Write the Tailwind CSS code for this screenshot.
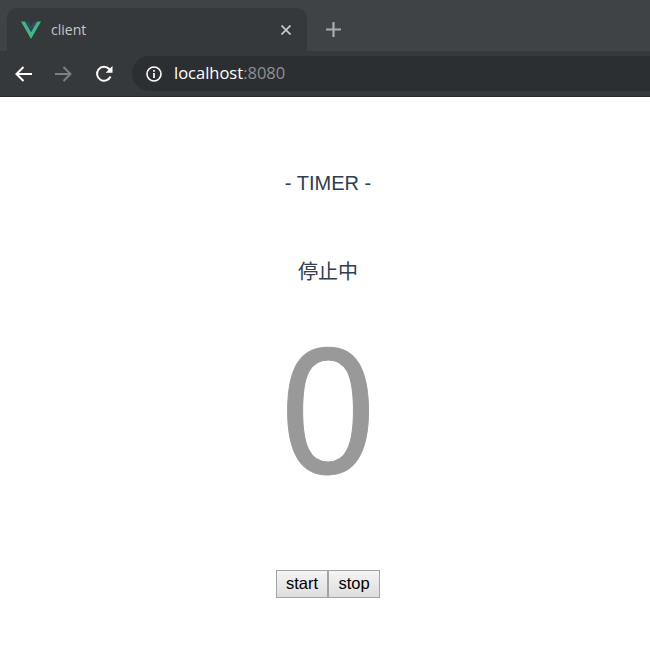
<!DOCTYPE html>
<html>
<head>
<meta charset="utf-8">
<script src="https://cdn.jsdelivr.net/npm/@tailwindcss/browser@4"></script>
</head>
<body class="w-[650px] h-[662px] overflow-hidden bg-white font-['Liberation_Sans','Noto_Sans_CJK_JP',sans-serif]">
<header class="h-[97px] bg-[#3f4346] flex flex-col border-b border-[#2a2c2e]">
  <div class="h-[51px] flex items-end pl-[7px]">
    <div class="w-[300px] h-[43px] bg-[#36393c] rounded-t-[10px] flex items-center pl-[14px] pr-[16px]">
      <svg class="w-[20px] h-[18px]" viewBox="0 0 20 18"><path d="M0 0.5H4L10 11L16 0.5H20L10 18Z" fill="#41b883"/><path d="M4 0.5H7.2L10 5.5L12.8 0.5H16L10 11Z" fill="#35495e"/></svg>
      <span class="ml-[10px] text-[14px] text-[#c4c7c5] font-['Open_Sans',sans-serif]">client</span>
      <svg class="ml-auto w-[10px] h-[10px]" viewBox="0 0 10 10"><path d="M0.5 0.5L9.5 9.5M9.5 0.5L0.5 9.5" stroke="#c8cacb" stroke-width="1.7"/></svg>
    </div>
    <svg class="ml-[19px] mb-[14px] w-[15px] h-[15px]" viewBox="0 0 15 15"><path d="M7.5 0V15M0 7.5H15" stroke="#a9abad" stroke-width="2.2"/></svg>
  </div>
  <div class="h-[45px] bg-[#36393c] flex items-center">
    <svg class="ml-[15px] w-[17px] h-[16px]" viewBox="0 0 17 16"><path d="M17 8H2M8.5 1L1.5 8L8.5 15" fill="none" stroke="#ffffff" stroke-width="2"/></svg>
    <svg class="ml-[23px] w-[17px] h-[16px]" viewBox="0 0 17 16"><path d="M0 8H15M8.5 1L15.5 8L8.5 15" fill="none" stroke="#7d7f81" stroke-width="2"/></svg>
    <svg class="ml-[23px] w-[18px] h-[18px]" viewBox="0 0 18 18"><path d="M15.5 11.5A7 7 0 1 1 14.2 4L16 6" fill="none" stroke="#ffffff" stroke-width="2"/><path d="M17.5 1V7.8H10.7Z" fill="#ffffff"/></svg>
    <div class="ml-[19px] flex-1 h-[35px] bg-[#2c2f31] rounded-l-full flex items-center pl-[14px]">
      <svg class="w-[16px] h-[16px]" viewBox="0 0 16 16"><circle cx="8" cy="8" r="7" fill="none" stroke="#ffffff" stroke-width="1.6"/><path d="M8 7V12M8 4V5.8" stroke="#ffffff" stroke-width="1.7"/></svg>
      <span class="ml-[12px] text-[16.5px] text-white font-['Open_Sans',sans-serif]">localhost<span class="text-[#8d9094]">:8080</span></span>
    </div>
  </div>
</header>
<main class="w-[656px] flex flex-col items-center text-center text-[#2c3e50]">
  <h1 class="mt-[74px] text-[20px] leading-[24px]">- TIMER -</h1>
  <p class="mt-[65px] text-[20px] leading-[24px]">停止中</p>
  <div class="mt-[23px] text-[180px] leading-[207px] text-[#999999] scale-x-[0.94] [-webkit-text-stroke:1px_#999999]">0</div>
  <div class="mt-[56px] flex">
    <button class="w-[52px] h-[28px] pb-[1px] text-[16.5px] text-black border border-[#a3a3a3] bg-gradient-to-b from-[#f4f4f4] to-[#dedede]">start</button>
    <button class="w-[52px] h-[28px] pb-[1px] text-[16.5px] text-black border border-[#a3a3a3] bg-gradient-to-b from-[#f4f4f4] to-[#dedede]">stop</button>
  </div>
</main>
</body>
</html>
